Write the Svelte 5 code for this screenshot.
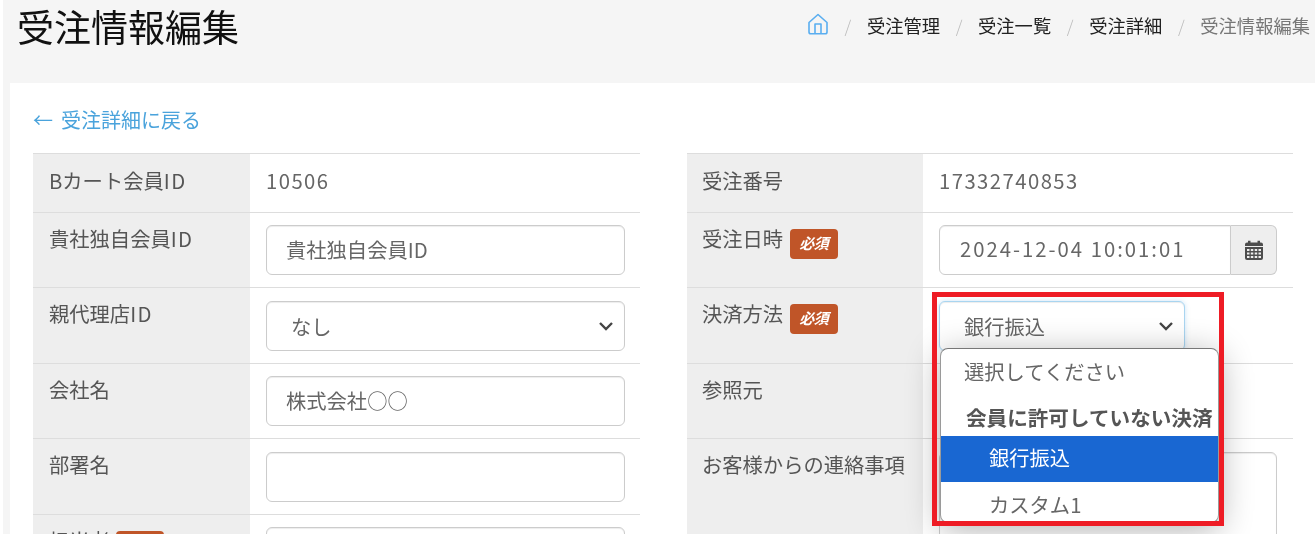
<script>
  const crumbs = ['受注管理', '受注一覧', '受注詳細'];
</script>

<div class="page">
  <header class="head">
    <h1>受注情報編集</h1>
    <nav class="crumbs">
      <svg class="home" viewBox="0 0 22 22" width="22" height="22" fill="none" stroke="#5aaef0" stroke-width="1.6" stroke-linejoin="round">
        <path d="M2 9.5 11 1.5l9 8V19a1.8 1.8 0 0 1-1.8 1.8H3.8A1.8 1.8 0 0 1 2 19z" />
        <path d="M8 20.8V11h6v9.8" />
      </svg>
      {#each crumbs as c}
        <span class="sep">/</span><span class="crumb">{c}</span>
      {/each}
      <span class="sep">/</span><span class="crumb current">受注情報編集</span>
    </nav>
  </header>

  <main class="panel">
    <a class="back" href="#top"><span class="arrow">←</span>受注詳細に戻る</a>
    <div class="cols">
      <div class="table">
        <div class="row short"><div class="label mid">B<span>カート会員</span><span class="lat">ID</span></div><div class="value mid lat">10506</div></div>
        <div class="row"><div class="label">貴社独自会員<span class="lat">ID</span></div><div class="value"><input class="field" value="貴社独自会員ID" /></div></div>
        <div class="row">
          <div class="label">親代理店<span class="lat">ID</span></div>
          <div class="value">
            <div class="select">
              <span>なし</span>
              <svg viewBox="0 0 16 16" width="16" height="16" fill="none" stroke="#444" stroke-width="2.4"><path d="M2 5l6 6 6-6" /></svg>
            </div>
          </div>
        </div>
        <div class="row"><div class="label">会社名</div><div class="value"><input class="field" value="株式会社○○" /></div></div>
        <div class="row"><div class="label">部署名</div><div class="value"><input class="field" /></div></div>
        <div class="row"><div class="label">担当者 <span class="badge">必須</span></div><div class="value"><input class="field" /></div></div>
      </div>

      <div class="table right">
        <div class="row short"><div class="label mid">受注番号</div><div class="value mid lat">17332740853</div></div>
        <div class="row">
          <div class="label">受注日時 <span class="badge">必須</span></div>
          <div class="value">
            <div class="group">
              <input class="date" value="2024-12-04 10:01:01" />
              <div class="addon">
                <svg viewBox="0 0 18 20" width="18" height="20" fill="#4d4d4d">
                  <path d="M0 7h18v11a2 2 0 0 1-2 2H2a2 2 0 0 1-2-2z" />
                  <path d="M0 6V4.500A2 2 0 0 1 2 2.500h1V.8h2.500v1.700h7V.8H15v1.700h1a2 2 0 0 1 2 2V6z" />
                  <path fill="#eee" d="M2 9h2.500v2H2zm3.800 0h2.500v2H5.800zm3.900 0h2.500v2H9.700zm3.800 0H16v2h-2.500zM2 12.500h2.500v2H2zm3.800 0h2.500v2H5.800zm3.900 0h2.500v2H9.700zm3.800 0H16v2h-2.500zM2 16h2.500v2H2zm3.800 0h2.500v2H5.800zm3.900 0h2.500v2H9.700zm3.800 0H16v2h-2.500z" />
                </svg>
              </div>
            </div>
          </div>
        </div>
        <div class="row">
          <div class="label">決済方法 <span class="badge">必須</span></div>
          <div class="value">
            <div class="select focus">
              <span>銀行振込</span>
              <svg viewBox="0 0 16 16" width="16" height="16" fill="none" stroke="#444" stroke-width="2.4"><path d="M2 5l6 6 6-6" /></svg>
            </div>
            <div class="menu">
              <div class="opt">選択してください</div>
              <div class="grp">会員に許可していない決済</div>
              <div class="opt sub on">銀行振込</div>
              <div class="opt sub">カスタム1</div>
            </div>
            <div class="callout"></div>
          </div>
        </div>
        <div class="row"><div class="label">参照元</div><div class="value"></div></div>
        <div class="row tall"><div class="label">お客様からの連絡事項</div><div class="value"><textarea class="area"></textarea></div></div>
      </div>
    </div>
  </main>
</div>

<style>
  :global(body) {
    margin: 0;
    background: #fff;
  }
  .page {
    height: 534px;
    overflow: hidden;
    margin-left: 3px;
    background: #f5f5f5;
    font-family: "Noto Sans CJK JP", "Noto Sans", sans-serif;
    font-size: 20.3px;
    font-weight: 400;
    color: #555;
    filter: blur(0.45px);
  }
  .head {
    height: 83px;
    display: flex;
    justify-content: space-between;
    align-items: flex-start;
    padding: 0 5px 0 14px;
    box-sizing: border-box;
  }
  h1 {
    margin: 0;
    font-size: 37px;
    line-height: 52px;
    font-weight: 400;
    color: #111;
  }
  .crumbs {
    display: flex;
    align-items: center;
    height: 26px;
    margin-top: 12px;
    color: #222;
    font-size: 18.3px;
    font-weight: 400;
  }
  .home {
    margin-top: -2px;
  }
  .sep {
    width: 38px;
    text-align: center;
    color: #bbb;
    font-weight: 300;
    font-size: 17px;
  }
  .crumb.current {
    color: #777;
  }
  .panel {
    margin-left: 7px;
    height: 451px;
    background: #fff;
    padding: 0 22px 0 23px;
  }
  .back {
    display: flex;
    align-items: baseline;
    height: 70px;
    line-height: 73px;
    color: #4aa3dc;
    text-decoration: none;
    font-size: 20px;
  }
  .arrow {
    width: 28px;
  }
  .cols {
    display: grid;
    grid-template-columns: 607px 606px;
    column-gap: 47px;
  }
  .table {
    display: flex;
    flex-direction: column;
  }
  .row {
    display: flex;
    height: 75.4px;
    box-sizing: border-box;
    border-top: 1px solid #ddd;
  }
  .row.short {
    height: 59px;
  }
  .row.tall {
    height: 200px;
  }
  .label {
    width: 217px;
    flex: none;
    box-sizing: border-box;
    padding: 10px 16px 0;
    line-height: 30px;
    background: #eee;
    color: #555;
    white-space: nowrap;
  }
  .right .label {
    width: 236px;
    padding-left: 15px;
  }
  .value {
    flex: 1;
    position: relative;
    box-sizing: border-box;
    padding: 12.4px 16px 0;
    color: #666;
  }
  .label.mid,
  .value.mid {
    padding-top: 11px;
    line-height: 30px;
  }
  .lat {
    letter-spacing: 1.45px;
  }
  .badge {
    display: inline-block;
    width: 48px;
    height: 30px;
    margin-left: 2px;
    vertical-align: top;
    margin-top: 6px;
    border-radius: 4px;
    background: #c05528;
    color: #fff;
    font-size: 15px;
    font-weight: 700;
    font-style: italic;
    line-height: 28px;
    text-align: center;
    letter-spacing: -0.5px;
  }
  .field,
  .select,
  .date,
  .area {
    box-sizing: border-box;
    width: 359px;
    height: 50px;
    border: 1px solid #ccc;
    border-radius: 6px;
    background: #fff;
    font: inherit;
    color: #666;
    padding: 0 19px 3px;
    outline: none;
    box-shadow: inset 0 1px 1px rgba(0, 0, 0, 0.075);
  }
  .select {
    display: flex;
    align-items: center;
    justify-content: space-between;
    padding: 0 10px 0 24px;
  }
  .select.focus {
    width: 246px;
    border-color: #a9d5f0;
    box-shadow: inset 0 1px 1px rgba(0, 0, 0, 0.075), 0 0 5px rgba(102, 175, 233, 0.35);
  }
  .group {
    display: flex;
    width: 338px;
    height: 50px;
  }
  .date {
    width: 292px;
    border-radius: 6px 0 0 6px;
    letter-spacing: 2px;
    padding-left: 20px;
    padding-bottom: 5px;
  }
  .addon {
    flex: 1;
    display: flex;
    align-items: center;
    justify-content: center;
    border: 1px solid #ccc;
    border-left: 0;
    border-radius: 0 6px 6px 0;
    background: #eee;
  }
  .area {
    width: 338px;
    height: 200px;
    display: block;
    resize: none;
  }
  .menu {
    position: absolute;
    z-index: 2;
    left: 17px;
    top: 60px;
    width: 279px;
    height: 175px;
    box-sizing: border-box;
    overflow: hidden;
    background: #fff;
    border: 1px solid #9a9a9a;
    border-top-color: #777;
    border-radius: 8px;
    box-shadow: 0 6px 34px rgba(0, 0, 0, 0.32);
    color: #666;
  }
  .opt {
    height: 46px;
    line-height: 44px;
    padding-left: 23px;
    white-space: nowrap;
  }
  .grp {
    height: 41px;
    line-height: 44px;
    padding-left: 25px;
    font-weight: 700;
    font-size: 20.6px;
    color: #555;
    white-space: nowrap;
  }
  .opt.sub {
    padding-left: 48px;
  }
  .opt.on {
    background: #1967d2;
    color: #fff;
    line-height: 43px;
  }
  .callout {
    position: absolute;
    z-index: 3;
    left: 9px;
    top: 4px;
    width: 292px;
    height: 234px;
    box-sizing: border-box;
    border: 5px solid #ee1c25;
    pointer-events: none;
  }
</style>
